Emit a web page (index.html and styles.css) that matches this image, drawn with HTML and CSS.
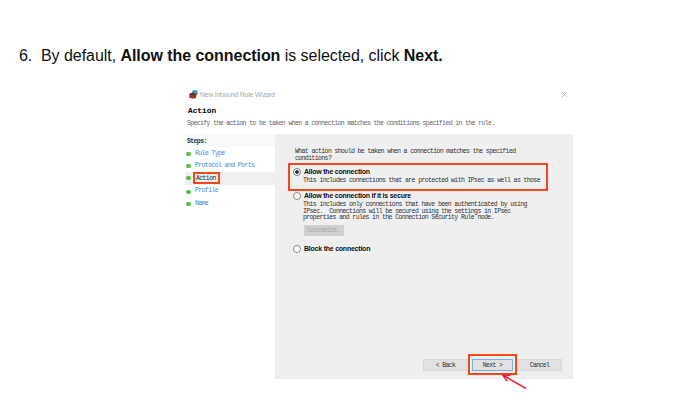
FILE: index.html
```html
<!DOCTYPE html>
<html lang="en">
<head>
    <meta charset="UTF-8">
    <title>New Inbound Rule Wizard</title>
    <link rel="stylesheet" href="styles.css">
</head>
<body>
    <div class="step-text">
        <span class="step-number">6.</span>
        <span class="step-body">By default, <b>Allow the connection</b> is selected, click <b>Next.</b></span>
    </div>
    <div class="wizard">
        <div class="title-bar">
            <svg class="app-icon" width="9" height="9" viewBox="0 0 9 9">
                <circle cx="5.8" cy="2.9" r="2.9" fill="#3b8fd0"/>
                <path d="M5.4.2l2 .4.8 1.8-1.4 1.4z" fill="#58b54a"/>
                <path d="M.3 3.8l3.3-1 3.6 1.2v4L4 8.8.3 7.8z" fill="#8c3b2b"/>
                <path d="M.3 3.8l3.3-1 3.6 1.2L4.2 5z" fill="#6e2a20"/>
            </svg>
            <span class="title">New Inbound Rule Wizard</span>
            <svg class="close" width="7" height="7" viewBox="0 0 7 7">
                <path d="M.7.7l5.6 5.6M6.3.7L.7 6.3" stroke="#b0b0b0" stroke-width=".8"/>
            </svg>
        </div>
        <div class="header">
            <div class="heading">Action</div>
            <div class="subheading">Specify the action to be taken when a connection matches the conditions specified in the rule.</div>
        </div>
        <div class="main">
            <div class="steps">
                <div class="steps-title">Steps:</div>
                <div class="step"><i class="dot"></i><span>Rule Type</span></div>
                <div class="step"><i class="dot"></i><span>Protocol and Ports</span></div>
                <div class="step current"><i class="dot"></i><span class="marked">Action</span></div>
                <div class="step"><i class="dot"></i><span>Profile</span></div>
                <div class="step"><i class="dot"></i><span>Name</span></div>
            </div>
            <div class="content">
                <div class="question">What action should be taken when a connection matches the specified<br>conditions?</div>
                <div class="option selected">
                    <i class="radio checked"></i>
                    <div>
                        <div class="label">Allow the connection</div>
                        <div class="desc">This includes connections that are protected with IPsec as well as those</div>
                    </div>
                </div>
                <div class="option secure">
                    <i class="radio"></i>
                    <div>
                        <div class="label">Allow the connection if it is secure</div>
                        <div class="desc">This includes only connections that have been authenticated by using<br>IPsec. &nbsp;Connections will be secured using the settings in IPsec<br>properties and rules in the Connection Security Rule node.</div>
                        <div class="customize">Customize…</div>
                    </div>
                </div>
                <div class="option block">
                    <i class="radio"></i>
                    <div class="label">Block the connection</div>
                </div>
                <div class="buttons">
                    <div class="btn">&lt; Back</div>
                    <div class="next-mark">
                        <div class="btn next">Next &gt;</div>
                        <svg class="arrow" width="28" height="18" viewBox="0 0 28 18">
                            <path d="M26 15.5L3.5 2.4M10.5 2.2L3 2.2l4.2 6" fill="none" stroke="#f5222d" stroke-width="1.5"/>
                        </svg>
                    </div>
                    <div class="btn">Cancel</div>
                </div>
            </div>
        </div>
    </div>
</body>
</html>
```

FILE: styles.css
```css
* {
    box-sizing: border-box;
}

body {
    margin: 0;
    height: 408px;
    overflow: hidden;
    background: #fff;
    font-family: "Liberation Sans", Arial, sans-serif;
}

.step-text {
    display: flex;
    padding: 46px 0 0 19px;
    font-size: 16px;
    line-height: 20px;
    letter-spacing: -0.05px;
    color: #111;
    white-space: nowrap;
}

.step-number {
    width: 22px;
}

.wizard {
    width: 391px;
    height: 293px;
    margin: 20px 0 0 182px;
    font-family: "Liberation Mono", "Courier New", monospace;
    font-size: 6.5px;
    line-height: 6.5px;
    letter-spacing: -0.61px;
    color: #333;
    white-space: nowrap;
}

.title-bar {
    display: flex;
    align-items: center;
    height: 17px;
    padding: 0 5px 0 7px;
}

.title {
    margin-left: 2px;
    padding-top: 1px;
    flex: 1;
    font-family: "Liberation Sans", Arial, sans-serif;
    font-size: 7px;
    letter-spacing: -0.28px;
    color: #aaa;
}

.header {
    height: 31px;
    padding: 4px 0 0 5px;
}

.heading {
    padding-left: 1px;
    font-size: 7.8px;
    font-weight: bold;
    line-height: 8px;
    letter-spacing: 0;
    color: #000;
}

.subheading {
    margin-top: 5px;
    line-height: 7px;
    letter-spacing: -0.63px;
    color: #666;
}

.main {
    display: flex;
    height: 245px;
}

.steps {
    width: 93px;
    padding-left: 3px;
}

.steps-title {
    height: 13px;
    padding: 5px 0 0 2px;
    background: #f9f9f9;
    font-weight: bold;
    color: #333;
}

.step {
    display: flex;
    align-items: center;
    height: 12.6px;
    padding: 1px 0 0 1px;
    color: #3a8bd8;
}

.dot {
    width: 5px;
    height: 4px;
    margin-right: 4px;
    border-radius: 2px;
    background: #4fc13c;
}

.current {
    padding-top: 0;
    background: #f0f0f0;
    color: #222;
}

.marked {
    width: 27px;
    height: 12px;
    margin-left: -2px;
    padding-left: 1px;
    border: 2px solid #fa4616;
    line-height: 9px;
}

.content {
    display: flex;
    flex-direction: column;
    flex: 1;
    padding: 15px 11px 4px 13px;
    background: #efefef;
}

.question {
    height: 14px;
    padding-left: 7px;
}

.option {
    display: flex;
    align-items: flex-start;
    width: 260px;
    padding-left: 5px;
}

.selected {
    height: 28px;
    padding: 3px 0 0 3px;
    border: 2px solid #fa4616;
}

.radio {
    flex: none;
    width: 8px;
    height: 8px;
    margin-right: 3px;
    border: 1px solid #888;
    border-radius: 50%;
    background: #fff;
}

.checked {
    border-color: #777;
    background: radial-gradient(#333 0 1.5px, #fff 2.2px);
}

.label {
    font-family: "Liberation Sans", Arial, sans-serif;
    font-size: 7px;
    font-weight: bold;
    line-height: 8px;
    letter-spacing: -0.23px;
    color: #111;
}

.desc {
    margin-left: -1px;
    padding-top: 2px;
}

.secure {
    padding-top: 1px;
}

.customize {
    width: 40px;
    height: 11px;
    margin-top: 3px;
    padding-left: 3px;
    background: #d0d0d0;
    color: #aaa;
    line-height: 12px;
}

.block {
    margin-top: 9px;
}

.buttons {
    display: flex;
    align-items: center;
    justify-content: flex-end;
    height: 21px;
    margin-top: auto;
}

.btn {
    width: 45px;
    height: 12px;
    background: #e1e1e1;
    border: 1px solid #d9d9d9;
    line-height: 12px;
    text-align: center;
}

.next-mark {
    position: relative;
    width: 49px;
    height: 21px;
    padding-top: 3px;
    border: 2px solid #fa4616;
}

.next {
    width: 41px;
    margin: 0 auto;
    border-color: #75b1e4;
}

.arrow {
    position: absolute;
    left: 30px;
    top: 17px;
}
```
